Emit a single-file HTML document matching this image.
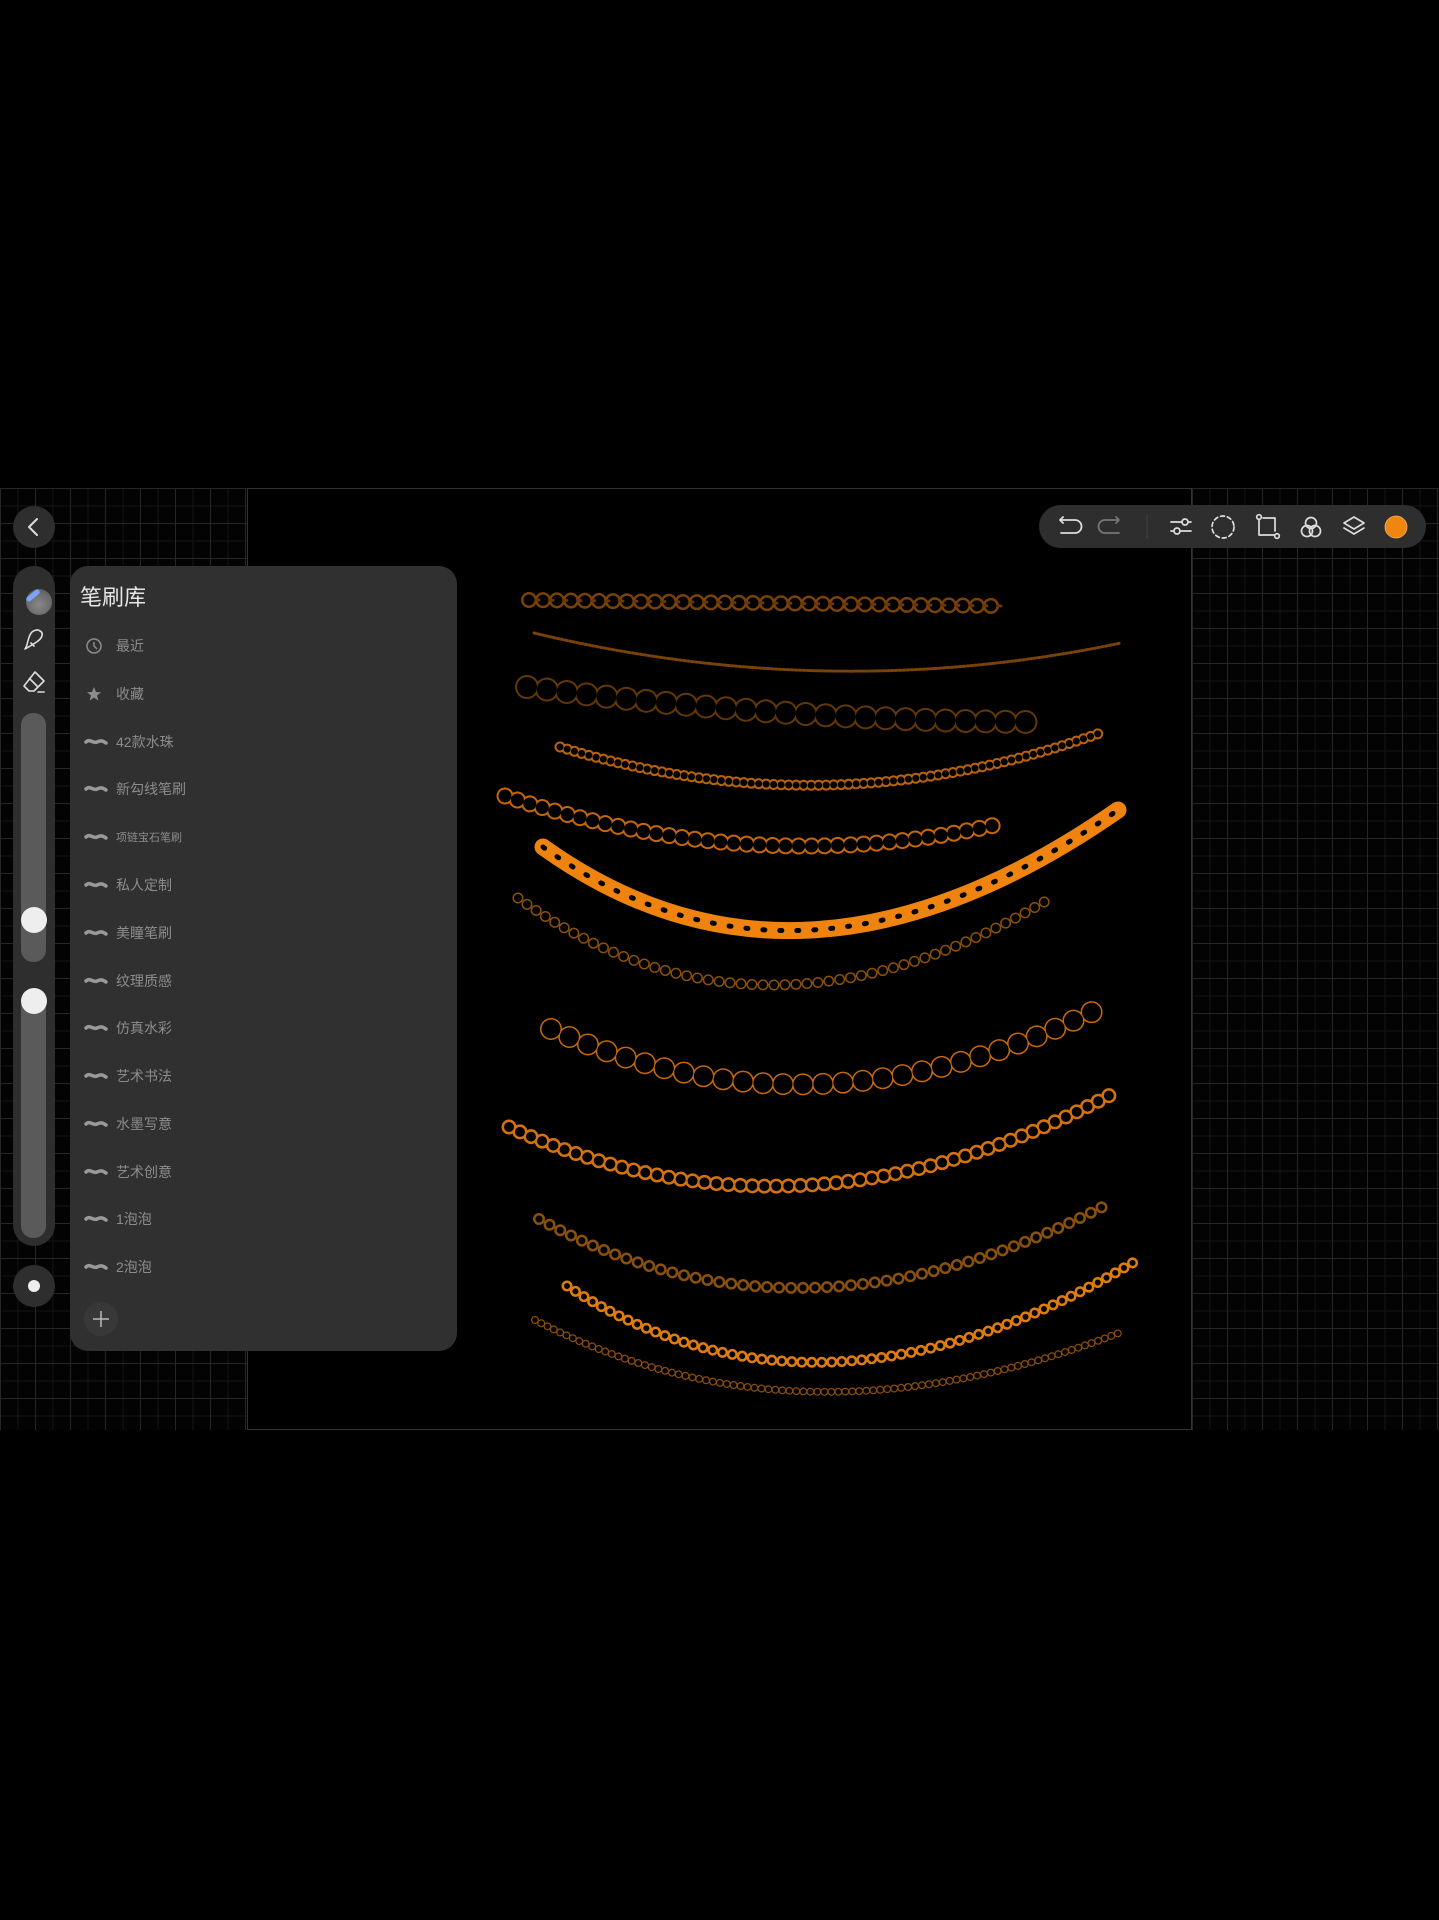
<!DOCTYPE html>
<html><head><meta charset="utf-8"><style>
html,body{margin:0;padding:0;background:#000;}
body{width:1439px;height:1920px;position:relative;overflow:hidden;font-family:"Liberation Sans","Noto Sans CJK SC",sans-serif;}
.grid{position:absolute;top:488px;height:942px;background-color:#030303;
background-image:linear-gradient(#262626 1px,transparent 1px),linear-gradient(90deg,#262626 1px,transparent 1px),linear-gradient(#141414 1px,transparent 1px),linear-gradient(90deg,#141414 1px,transparent 1px);
background-size:35px 35px,35px 35px,17.5px 17.5px,17.5px 17.5px;}
.canvas{position:absolute;left:247px;top:488px;width:943px;height:940px;background:#000;border:1px solid #333;}
.panel{position:absolute;left:70px;top:566px;width:387px;height:785px;background:#303030;border-radius:18px;}
.title{position:absolute;left:10px;top:14px;font-size:22px;color:#e6e6e6;}
.item{position:absolute;left:14px;height:24px;width:300px;}
.item span{position:absolute;left:32px;top:2px;font-size:14px;color:#8c8c8c;}
.item svg{position:absolute;left:0;top:2px;}
.circ{position:absolute;border-radius:50%;}
</style></head><body>
<div class="grid" style="left:0;width:247px;"></div>
<div class="grid" style="left:1192px;width:247px;"></div>
<div class="canvas"></div>

<svg style="position:absolute;left:0;top:0" width="1439" height="1920" fill="none" stroke-linecap="round">
<!-- 1 -->
<path d="M529,600 Q760,603 998,606" stroke="#7a4208" stroke-width="16" stroke-dasharray="0 14"/>
<path d="M529,600 Q760,603 998,606" stroke="#000" stroke-width="11" stroke-dasharray="0 14"/>
<path d="M536,600 Q767,603 1005,606" stroke="#6a3806" stroke-width="3" stroke-dasharray="3 11"/>
<!-- 2 -->
<path d="M534,633 Q830,704 1121,643" stroke="#7a4208" stroke-width="3" stroke-dasharray="2 2"/>
<!-- 3 -->
<path d="M527,687 Q780,720 1029,722" stroke="#643806" stroke-width="24" stroke-dasharray="0 20"/>
<path d="M527,687 Q780,720 1029,722" stroke="#000" stroke-width="20" stroke-dasharray="0 20"/>
<!-- 4 -->
<path d="M560,747 Q830,830 1100,733" stroke="#b8620c" stroke-width="11" stroke-dasharray="0 7.5"/>
<path d="M560,747 Q830,830 1100,733" stroke="#000" stroke-width="7" stroke-dasharray="0 7.5"/>
<!-- 5 -->
<path d="M505,796 Q760,880 1004,823" stroke="#c4670c" stroke-width="17" stroke-dasharray="0 13"/>
<path d="M505,796 Q760,880 1004,823" stroke="#000" stroke-width="13" stroke-dasharray="0 13"/>
<!-- 6 -->
<path d="M543,847 Q800,1031 1118,810" stroke="#ee840f" stroke-width="17"/>
<path d="M543,847 Q800,1031 1118,810" stroke="#000" stroke-width="5" stroke-dasharray="2 15"/>
<!-- 7 -->
<path d="M518,898 Q760,1072 1051,898" stroke="#8a500c" stroke-width="11" stroke-dasharray="0 11"/>
<path d="M518,898 Q760,1072 1051,898" stroke="#000" stroke-width="8" stroke-dasharray="0 11"/>
<!-- 8 -->
<path d="M551,1029 Q820,1151 1108,1004" stroke="#c8690e" stroke-width="22" stroke-dasharray="0 20"/>
<path d="M551,1029 Q820,1151 1108,1004" stroke="#000" stroke-width="19" stroke-dasharray="0 20"/>
<!-- 9 -->
<path d="M509,1127 Q800,1260 1112,1094" stroke="#d4720f" stroke-width="15" stroke-dasharray="0 12"/>
<path d="M509,1127 Q800,1260 1112,1094" stroke="#000" stroke-width="10" stroke-dasharray="0 12"/>
<!-- 10 -->
<path d="M539,1219 Q800,1364 1108,1204" stroke="#8a500e" stroke-width="12" stroke-dasharray="0 12"/>
<path d="M539,1219 Q800,1364 1108,1204" stroke="#000" stroke-width="7" stroke-dasharray="0 12"/>
<!-- 11 -->
<path d="M567,1286 Q820,1451 1139,1259" stroke="#df7c0f" stroke-width="11" stroke-dasharray="0 10"/>
<path d="M567,1286 Q820,1451 1139,1259" stroke="#000" stroke-width="6" stroke-dasharray="0 10"/>
<!-- 12 -->
<path d="M535,1320 Q800,1458 1124,1331" stroke="#8a4c0c" stroke-width="8" stroke-dasharray="0 7"/>
<path d="M535,1320 Q800,1458 1124,1331" stroke="#000" stroke-width="5.5" stroke-dasharray="0 7"/>
</svg>

<!-- back button -->
<div class="circ" style="left:13px;top:506px;width:42px;height:42px;background:#2e2e2e;"></div>
<svg style="position:absolute;left:13px;top:506px" width="42" height="42"><path d="M24,13 L16,21 L24,29" stroke="#ddd" stroke-width="2" fill="none" stroke-linecap="round" stroke-linejoin="round"/></svg>

<!-- left tool bar -->
<div style="position:absolute;left:13px;top:566px;width:42px;height:680px;background:#2e2e2e;border-radius:21px;"></div>
<div class="circ" style="left:26px;top:589px;width:26px;height:26px;background:radial-gradient(circle at 50% 60%,#888,#555);"></div>
<div style="position:absolute;left:25px;top:593px;width:16px;height:5px;background:#7aa4ff;transform:rotate(-40deg);border-radius:3px;"></div>
<svg style="position:absolute;left:20px;top:625px" width="28" height="28" fill="none" stroke="#ddd" stroke-width="1.6" stroke-linecap="round" stroke-linejoin="round"><path d="M5,24 C8,20 7,16 10,10 C12,5 18,4 20,6 C24,8 22,13 18,16 C14,19 10,21 5,24 Z M11,18 L14,21"/></svg>
<svg style="position:absolute;left:20px;top:668px" width="28" height="28" fill="none" stroke="#ddd" stroke-width="1.6" stroke-linejoin="round"><path d="M15,4 L24,13 L14,23 L9,23 L4,18 Z M9,10 L18,19"/><path d="M18,24 L24,24" stroke-linecap="round"/></svg>
<div style="position:absolute;left:21px;top:713px;width:25px;height:249px;background:#5a5a5a;border-radius:12px;"></div>
<div class="circ" style="left:21px;top:907px;width:26px;height:26px;background:#eee;"></div>
<div style="position:absolute;left:21px;top:990px;width:25px;height:248px;background:#5a5a5a;border-radius:12px;"></div>
<div class="circ" style="left:21px;top:988px;width:26px;height:26px;background:#eee;"></div>
<div class="circ" style="left:13px;top:1265px;width:42px;height:42px;background:#2e2e2e;"></div>
<div class="circ" style="left:28px;top:1280px;width:12px;height:12px;background:#eee;"></div>

<!-- panel -->
<div class="panel">
<div class="title">笔刷库</div>
<div class="item" style="top:68px"><svg width="20" height="20" fill="none" stroke="#8c8c8c" stroke-width="1.5"><circle cx="10" cy="10" r="7"/><path d="M10,6 L10,10 L13,13"/></svg><span>最近</span></div>
<div class="item" style="top:116px"><svg width="20" height="20"><path d="M10,3 L12,8 L17,8.3 L13,11.5 L14.4,16.5 L10,13.6 L5.6,16.5 L7,11.5 L3,8.3 L8,8 Z" fill="#8c8c8c"/></svg><span>收藏</span></div>
<div class="item" style="top:164px"><svg width="24" height="20"><path d="M2,10 C6,6 9,12 13,10 C17,8 19,9 22,11" stroke="#999" stroke-width="3.5" fill="none" stroke-linecap="round"/></svg><span>42款水珠</span></div>
<div class="item" style="top:211px"><svg width="24" height="20"><path d="M2,10 C6,6 9,12 13,10 C17,8 19,9 22,11" stroke="#999" stroke-width="3.5" fill="none" stroke-linecap="round"/></svg><span>新勾线笔刷</span></div>
<div class="item" style="top:259px"><svg width="24" height="20"><path d="M2,10 C6,6 9,12 13,10 C17,8 19,9 22,11" stroke="#999" stroke-width="3.5" fill="none" stroke-linecap="round"/></svg><span style="font-size:11px;top:4px">项链宝石笔刷</span></div>
<div class="item" style="top:307px"><svg width="24" height="20"><path d="M2,10 C6,6 9,12 13,10 C17,8 19,9 22,11" stroke="#999" stroke-width="3.5" fill="none" stroke-linecap="round"/></svg><span>私人定制</span></div>
<div class="item" style="top:355px"><svg width="24" height="20"><path d="M2,10 C6,6 9,12 13,10 C17,8 19,9 22,11" stroke="#999" stroke-width="3.5" fill="none" stroke-linecap="round"/></svg><span>美瞳笔刷</span></div>
<div class="item" style="top:403px"><svg width="24" height="20"><path d="M2,10 C6,6 9,12 13,10 C17,8 19,9 22,11" stroke="#999" stroke-width="3.5" fill="none" stroke-linecap="round"/></svg><span>纹理质感</span></div>
<div class="item" style="top:450px"><svg width="24" height="20"><path d="M2,10 C6,6 9,12 13,10 C17,8 19,9 22,11" stroke="#999" stroke-width="3.5" fill="none" stroke-linecap="round"/></svg><span>仿真水彩</span></div>
<div class="item" style="top:498px"><svg width="24" height="20"><path d="M2,10 C6,6 9,12 13,10 C17,8 19,9 22,11" stroke="#999" stroke-width="3.5" fill="none" stroke-linecap="round"/></svg><span>艺术书法</span></div>
<div class="item" style="top:546px"><svg width="24" height="20"><path d="M2,10 C6,6 9,12 13,10 C17,8 19,9 22,11" stroke="#999" stroke-width="3.5" fill="none" stroke-linecap="round"/></svg><span>水墨写意</span></div>
<div class="item" style="top:594px"><svg width="24" height="20"><path d="M2,10 C6,6 9,12 13,10 C17,8 19,9 22,11" stroke="#999" stroke-width="3.5" fill="none" stroke-linecap="round"/></svg><span>艺术创意</span></div>
<div class="item" style="top:641px"><svg width="24" height="20"><path d="M2,10 C6,6 9,12 13,10 C17,8 19,9 22,11" stroke="#999" stroke-width="3.5" fill="none" stroke-linecap="round"/></svg><span>1泡泡</span></div>
<div class="item" style="top:689px"><svg width="24" height="20"><path d="M2,10 C6,6 9,12 13,10 C17,8 19,9 22,11" stroke="#999" stroke-width="3.5" fill="none" stroke-linecap="round"/></svg><span>2泡泡</span></div>
<div class="circ" style="left:14px;top:736px;width:34px;height:34px;background:#383838;"></div>
<svg style="position:absolute;left:14px;top:736px" width="34" height="34"><path d="M17,9 V25 M9,17 H25" stroke="#bbb" stroke-width="1.5"/></svg>
</div>

<!-- top toolbar -->
<div style="position:absolute;left:1039px;top:505px;width:387px;height:43px;background:#2e2e2e;border-radius:22px;"></div>
<svg style="position:absolute;left:1039px;top:505px" width="387" height="43" fill="none" stroke-linecap="round" stroke-linejoin="round">
<path d="M21,15 H36 A6,6 0 0 1 36,28 H22 M24,12 L21,15 L24,18" stroke="#ddd" stroke-width="1.8"/>
<path d="M80,15 H66 A6,6 0 0 0 66,28 H80 M77,12 L80,15 L77,18" stroke="#777" stroke-width="1.8"/>
<path d="M108,10 V33" stroke="#444" stroke-width="1"/>
<g stroke="#ddd" stroke-width="1.7"><path d="M132,17 H152 M132,26 H152"/><circle cx="146" cy="17" r="3" fill="#2e2e2e"/><circle cx="138" cy="26" r="3" fill="#2e2e2e"/></g>
<circle cx="184" cy="22" r="11" stroke="#ddd" stroke-width="1.7" stroke-dasharray="4 3"/>
<g stroke="#ddd" stroke-width="1.7"><path d="M220,14 V30 H236 M224,13 H236 V26"/><circle cx="220" cy="12" r="2.3" fill="#2e2e2e"/><circle cx="238" cy="31" r="2.3" fill="#2e2e2e"/></g>
<g stroke="#ddd" stroke-width="1.7"><circle cx="272" cy="18" r="5.5"/><circle cx="268" cy="26" r="5.5"/><circle cx="276" cy="26" r="5.5"/></g>
<g stroke="#ddd" stroke-width="1.7"><path d="M305,18 L315,12 L325,18 L315,24 Z"/><path d="M305,23 L315,29 L325,23"/></g>
<circle cx="357" cy="22" r="11" fill="#f0850f" stroke="#f5b060" stroke-width="0.8"/>
</svg>
</body></html>
